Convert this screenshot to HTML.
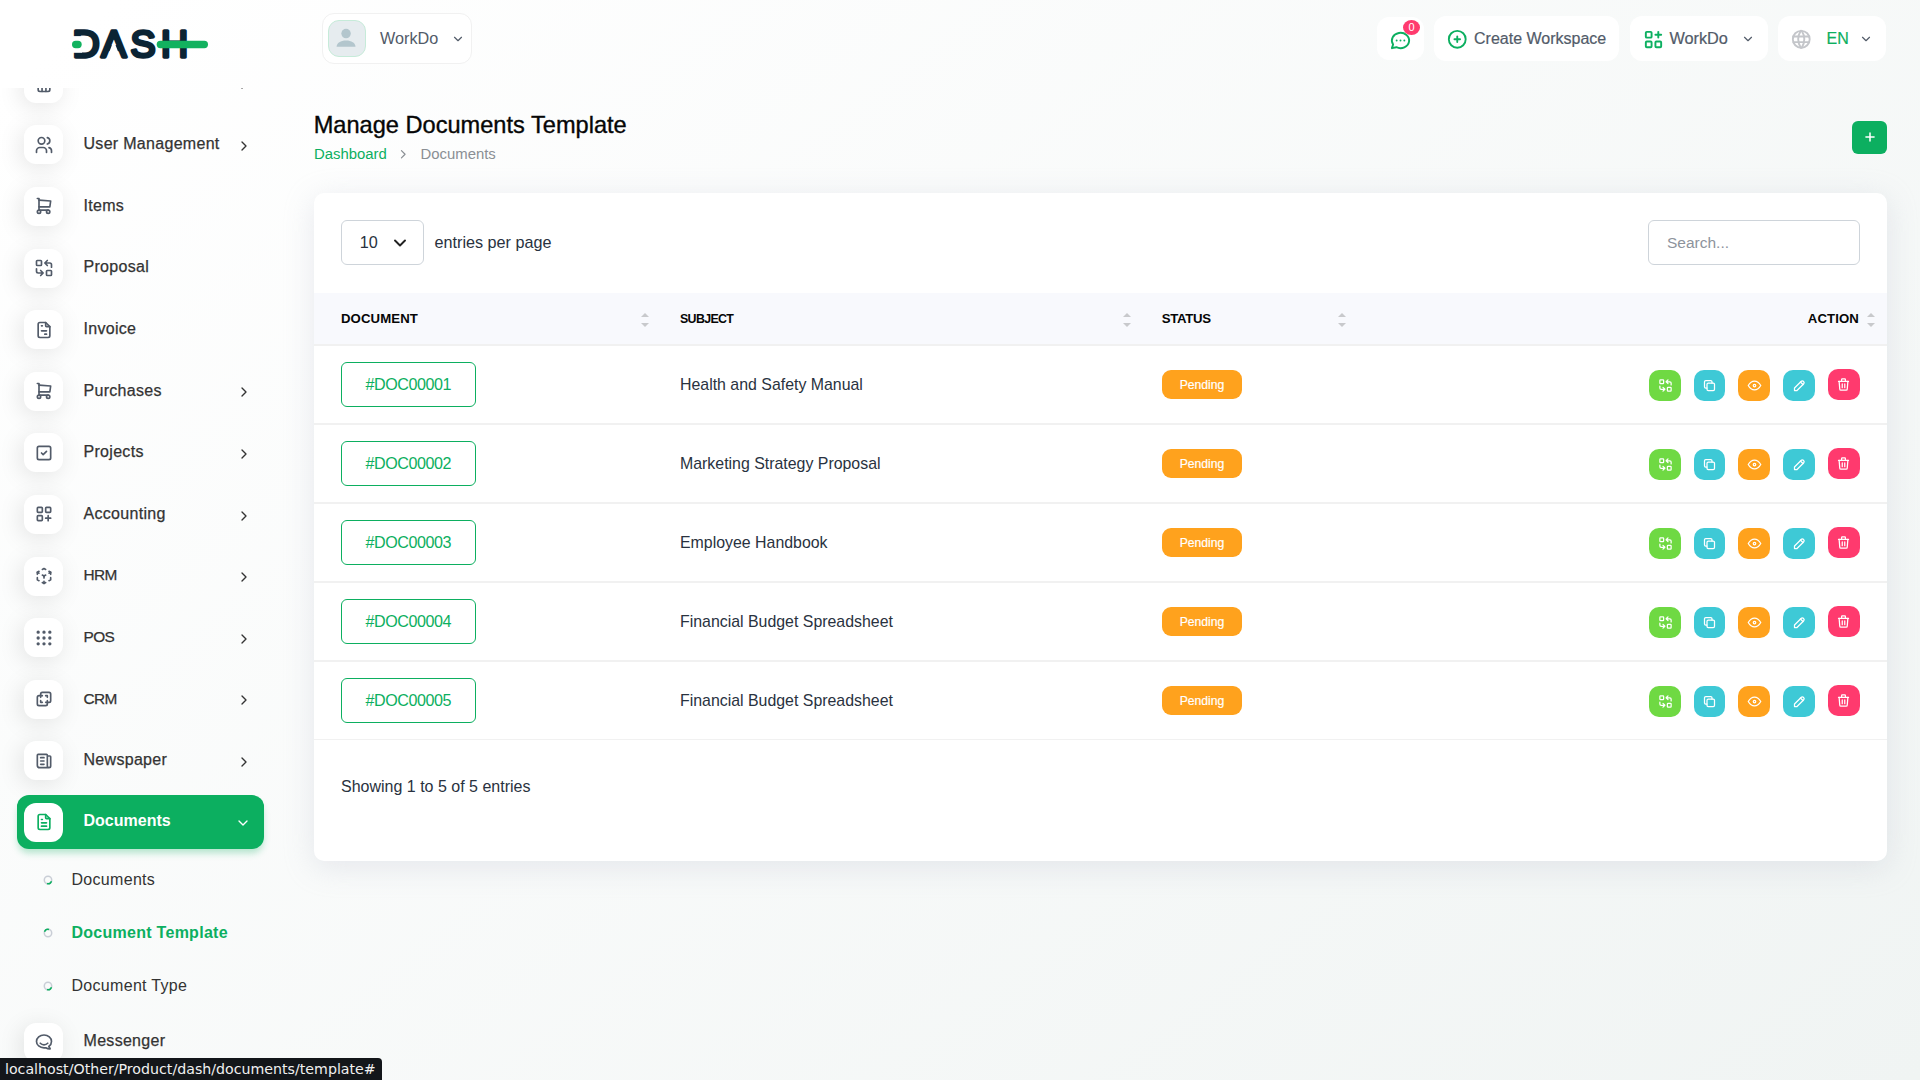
<!DOCTYPE html>
<html lang="en">
<head>
<meta charset="utf-8">
<title>Manage Documents Template</title>
<style>
*{box-sizing:border-box;margin:0;padding:0}
html,body{width:1920px;height:1080px;overflow:hidden}
body{font-family:"Liberation Sans",sans-serif;color:#293240;font-size:15px;
 background:linear-gradient(141.55deg,rgba(240,244,243,0) 3.46%,#f0f4f3 99.86%),#ffffff;position:relative}
svg.ti{fill:none;stroke:currentColor;stroke-width:2;stroke-linecap:round;stroke-linejoin:round;display:block}
a{text-decoration:none;color:inherit}

/* ---------- sidebar ---------- */
#logo{position:absolute;left:70px;top:26px;width:142px;height:38px}
#nav{position:absolute;left:0;top:88px;width:290px;height:992px;overflow:hidden}
.item{position:absolute;left:17px;width:247px;height:53.5px;border-radius:12px;color:#333;}
.item .tile{position:absolute;left:7px;top:7.4px;width:39px;height:39px;border-radius:12px;background:#fff;
 box-shadow:-3px 4px 23px rgba(0,0,0,.1);color:#525b69}
.item .tile svg{position:absolute;left:9.5px;top:9.5px;width:20px;height:20px}
.item .lbl{position:absolute;left:66.5px;top:15.3px;font-size:16px;letter-spacing:.3px;line-height:22px;white-space:nowrap;color:#333;-webkit-text-stroke:.25px}
.item .arr{position:absolute;left:218.8px;top:20px;width:16px;height:16px;color:#333}
.item.active{background:#0CAF60;box-shadow:0 5px 7px -1px rgba(12,175,96,.3)}
.item.active:before{content:"";position:absolute;left:0;top:-1px;width:100%;height:14px;background:#0CAF60;border-radius:12px 12px 0 0}
.item.active .tile{color:#0CAF60;box-shadow:none}
.item.active .lbl{color:#fff;font-weight:bold;letter-spacing:0;top:14.3px;-webkit-text-stroke:0}
.item.active .arr{color:#fff;top:19.2px;left:217.8px}
.sub{position:absolute;left:0;width:280px;height:30px}
.sub .dot{position:absolute;left:43.3px;top:10.7px;width:10px;height:10px}
.sub .lbl{position:absolute;left:71.5px;top:5.3px;font-size:16px;letter-spacing:.3px;line-height:22px;white-space:nowrap;color:#333}
.sub.on .lbl{color:#0CAF60;font-weight:bold;letter-spacing:.27px}

/* ---------- top bar ---------- */
#userdd{position:absolute;left:322px;top:13px;width:149.5px;height:50.5px;border:1px solid #f1f1f1;border-radius:12px;background:#fff}
#userdd .av{position:absolute;left:5px;top:6px;width:38px;height:37px;border-radius:11px;background:#e6ecef;border:1px solid #c6ebd9;overflow:hidden}
#userdd .nm{position:absolute;left:57px;top:14px;font-size:16.2px;line-height:20px;color:#525b69;white-space:nowrap}
#userdd svg.ti{position:absolute;left:128px;top:18px;width:14px;height:14px;color:#525b69}
.tb{position:absolute;top:16px;height:45px;background:#fff;border-radius:12px;color:#525b69}
.tb .tx{position:absolute;top:12px;font-size:16px;line-height:22px;white-space:nowrap;-webkit-text-stroke:.2px}
.tb svg.ti{position:absolute}
#badge{position:absolute;left:1402.8px;top:19.7px;width:17.4px;height:15.4px;border-radius:50%;background:#ff3a6e;color:#fff;font-size:11px;line-height:15.4px;text-align:center}

/* ---------- page head ---------- */
#ttl{position:absolute;left:313.7px;top:109.7px;font-size:23.6px;line-height:30px;color:#060606;white-space:nowrap;font-weight:normal;-webkit-text-stroke:.35px #060606}
#bc{position:absolute;left:314px;top:144px;font-size:14.9px;line-height:20px;white-space:nowrap}
#bc .a{position:absolute;left:0;top:0;color:#0CAF60}
#bc .b{position:absolute;left:106.5px;top:0;color:#8a8f94}
#bc svg{position:absolute;left:82.3px;top:2.8px;width:14.5px;height:14.5px;color:#8a8f94}
#add{position:absolute;left:1852px;top:121px;width:35px;height:33px;border-radius:6px;background:#0CAF60;color:#fff}
#add svg{position:absolute;left:10.5px;top:8.6px;width:14px;height:14px;stroke-width:2.6}

/* ---------- card ---------- */
#card{position:absolute;left:314px;top:193px;width:1573px;height:668px;background:#fff;border-radius:10px;
 box-shadow:0 6px 30px rgba(182,186,203,.3)}
#sel{position:absolute;left:27px;top:27px;width:83px;height:45px;border:1px solid #ced4da;border-radius:6px}
#sel span{position:absolute;left:17.8px;top:10px;font-size:16.2px;line-height:22px;color:#293240}
#sel svg{position:absolute;left:48.2px;top:12.4px;width:20px;height:20px;color:#222;stroke-width:2.3}
#epp{position:absolute;left:120.5px;top:38px;font-size:16.2px;line-height:22px;white-space:nowrap;color:#293240}
#srch{position:absolute;left:1334px;top:27px;width:212px;height:45px;border:1px solid #ced4da;border-radius:6px}
#srch span{position:absolute;left:18px;top:11px;font-size:15.5px;line-height:22px;color:#8d939c}
#thead{position:absolute;left:0;top:100px;width:1573px;height:51px;background:#f8f9fd;border-bottom:0}
#thead:after{content:"";position:absolute;left:0;top:51px;width:100%;height:2px;background:#f1f1f1}
.th{position:absolute;top:17.8px;font-size:13.2px;line-height:16px;font-weight:bold;color:#060606;white-space:nowrap;letter-spacing:.1px}
.srt{position:absolute;top:19.8px;width:8px;height:15px}
.srt:before,.srt:after{content:"";position:absolute;left:0;border-left:4px solid transparent;border-right:4px solid transparent}
.srt:before{top:0;border-bottom:4px solid #c8c9cc}
.srt:after{top:10.7px;border-top:4px solid #c8c9cc}
.row{position:absolute;left:0;width:1573px;height:79px;border-bottom:2px solid #f1f1f1}
.doc{position:absolute;left:27px;top:16px;width:135px;height:45px;border:1px solid #0CAF60;border-radius:6px;color:#0CAF60;
 font-size:16.1px;letter-spacing:-.45px;line-height:43px;text-align:center;text-indent:-.4px}
.subj{position:absolute;left:366px;top:28px;font-size:15.9px;line-height:22px;white-space:nowrap;color:#293240}
.pend{position:absolute;left:848px;top:24px;width:80px;height:29px;border-radius:9px;background:#ffa21d;color:#fff;font-size:12.2px;line-height:31.4px;text-align:center;-webkit-text-stroke:.2px}
.ab{position:absolute;top:24px;width:32px;height:31px;border-radius:10px;color:#fff}
.ab svg{position:absolute;left:8.5px;top:8px;width:15px;height:15px}
.ab1{left:1335px;background:#6fd943}
.ab2{left:1379.7px;background:#3ec9d6;width:31.2px}
.ab2 svg{left:8.1px}
.row.last{border-bottom-width:1px;height:78px}
.ab3{left:1424.3px;background:#ffa21d}
.ab4{left:1469px;background:#3ec9d6}
.ab5{left:1513.7px;background:#ff3a6e;top:23px}
#info{position:absolute;left:27px;top:583px;font-size:16px;line-height:22px;white-space:nowrap;color:#293240}

#status{position:absolute;left:0;top:1058px;width:382px;height:22px;background:#13161a;border-top-right-radius:4px;color:#f0f0f0;
 font-family:"DejaVu Sans","Liberation Sans",sans-serif;font-size:14.2px;line-height:23px;padding-left:5px;white-space:nowrap}
</style>
</head>
<body>
<svg id="logo" viewBox="0 0 142 38">
<text x="2.5 31.2 60.6 91.1" y="31.35" font-family="Liberation Sans, sans-serif" font-size="37.6" fill="#0b2434" stroke="#0b2434" stroke-width="3.3" stroke-linejoin="round" stroke-linecap="round">DASH</text>
<rect x="0" y="10.1" width="11.9" height="16.7" fill="#fff"/>
<polygon points="39.07,26.39 48.44,26.39 45.21,18.13 42.25,18.13" fill="#fff"/>
<rect x="2" y="14.8" width="9.7" height="7.4" rx="3.7" fill="#12b25f"/>
<rect x="86.7" y="14.8" width="51.3" height="7.4" rx="3.7" fill="#12b25f"/>
</svg>
<div id="nav">
<div class="item" style="top:-31.6px"><span class="tile"><svg class="ti" viewBox="0 0 24 24" style="top:10.200px"><path d="M5 12v7a2 2 0 0 0 2 2h10a2 2 0 0 0 2 -2v-7"/><path d="M9.670 21v-7"/><path d="M14.330 21v-7"/><path d="M5 12l-2 0l9 -9l9 9l-2 0"/></svg></span><span class="lbl" style="top:12px">Dashboard</span><svg class="ti arr" viewBox="0 0 24 24" ><polyline points="9 6 15 12 9 18"/></svg></div>
<div class="item" style="top:30.0px"><span class="tile"><svg class="ti" viewBox="0 0 24 24" ><circle cx="9" cy="7" r="4"/><path d="M3 21v-2a4 4 0 0 1 4 -4h4a4 4 0 0 1 4 4v2"/><path d="M16 3.13a4 4 0 0 1 0 7.75"/><path d="M21 21v-2a4 4 0 0 0 -3 -3.85"/></svg></span><span class="lbl">User Management</span><svg class="ti arr" viewBox="0 0 24 24" ><polyline points="9 6 15 12 9 18"/></svg></div>
<div class="item" style="top:91.6px"><span class="tile"><svg class="ti" viewBox="0 0 24 24" ><circle cx="6" cy="19" r="2"/><circle cx="17" cy="19" r="2"/><path d="M17 17h-11v-14h-2"/><path d="M6 5l14 1l-1 7h-13"/></svg></span><span class="lbl">Items</span></div>
<div class="item" style="top:153.2px"><span class="tile"><svg class="ti" viewBox="0 0 24 24" ><rect x="3" y="3" width="6" height="6" rx="1"/><rect x="15" y="15" width="6" height="6" rx="1"/><path d="M21 11v-3a2 2 0 0 0 -2 -2h-6l3 3m0 -6l-3 3"/><path d="M3 13v3a2 2 0 0 0 2 2h6l-3 -3m0 6l3 -3"/></svg></span><span class="lbl">Proposal</span></div>
<div class="item" style="top:214.8px"><span class="tile"><svg class="ti" viewBox="0 0 24 24" ><path d="M14 3v4a1 1 0 0 0 1 1h4"/><path d="M17 21h-10a2 2 0 0 1 -2 -2v-14a2 2 0 0 1 2 -2h7l5 5v11a2 2 0 0 1 -2 2z"/><path d="M9 7h1"/><path d="M9 13h6"/><path d="M13 17h2"/></svg></span><span class="lbl">Invoice</span></div>
<div class="item" style="top:276.4px"><span class="tile"><svg class="ti" viewBox="0 0 24 24" ><circle cx="6" cy="19" r="2"/><circle cx="17" cy="19" r="2"/><path d="M17 17h-11v-14h-2"/><path d="M6 5l14 1l-1 7h-13"/></svg></span><span class="lbl">Purchases</span><svg class="ti arr" viewBox="0 0 24 24" ><polyline points="9 6 15 12 9 18"/></svg></div>
<div class="item" style="top:338.0px"><span class="tile"><svg class="ti" viewBox="0 0 24 24" ><rect x="4" y="4" width="16" height="16" rx="2"/><path d="M9 12l2 2l4 -4"/></svg></span><span class="lbl">Projects</span><svg class="ti arr" viewBox="0 0 24 24" ><polyline points="9 6 15 12 9 18"/></svg></div>
<div class="item" style="top:399.6px"><span class="tile"><svg class="ti" viewBox="0 0 24 24" ><rect x="4" y="4" width="6" height="6" rx="1"/><rect x="14" y="4" width="6" height="6" rx="1"/><rect x="4" y="14" width="6" height="6" rx="1"/><path d="M14 17h6m-3 -3v6"/></svg></span><span class="lbl">Accounting</span><svg class="ti arr" viewBox="0 0 24 24" ><polyline points="9 6 15 12 9 18"/></svg></div>
<div class="item" style="top:461.2px"><span class="tile"><svg class="ti" viewBox="0 0 24 24" ><path d="M6 17.6l-2 -1.1v-2.5"/><path d="M4 10v-2.5l2 -1.1"/><path d="M10 4.1l2 -1.1l2 1.1"/><path d="M18 6.4l2 1.1v2.5"/><path d="M20 14v2.5l-2 1.12"/><path d="M14 19.9l-2 1.1l-2 -1.1"/><path d="M12 12l2 -1.1"/><path d="M18 8.6l2 -1.1"/><path d="M12 12v2.5"/><path d="M12 18.5v2.5"/><path d="M12 12l-2 -1.12"/><path d="M6 8.6l-2 -1.1"/></svg></span><span class="lbl" style="font-size:15.4px;letter-spacing:-.6px">HRM</span><svg class="ti arr" viewBox="0 0 24 24" ><polyline points="9 6 15 12 9 18"/></svg></div>
<div class="item" style="top:522.8px"><span class="tile"><svg class="ti" viewBox="0 0 24 24" ><circle cx="5" cy="5" r="1"/><circle cx="12" cy="5" r="1"/><circle cx="19" cy="5" r="1"/><circle cx="5" cy="12" r="1"/><circle cx="12" cy="12" r="1"/><circle cx="19" cy="12" r="1"/><circle cx="5" cy="19" r="1"/><circle cx="12" cy="19" r="1"/><circle cx="19" cy="19" r="1"/></svg></span><span class="lbl" style="font-size:15.4px;letter-spacing:-.6px">POS</span><svg class="ti arr" viewBox="0 0 24 24" ><polyline points="9 6 15 12 9 18"/></svg></div>
<div class="item" style="top:584.4px"><span class="tile"><svg class="ti" viewBox="0 0 24 24" ><path d="M16 16v2a2 2 0 0 1 -2 2h-8a2 2 0 0 1 -2 -2v-8a2 2 0 0 1 2 -2h2v-2a2 2 0 0 1 2 -2h8a2 2 0 0 1 2 2v8a2 2 0 0 1 -2 2h-2"/><path d="M10 8h-2v2"/><path d="M8 14v2h2"/><path d="M14 8h2v2"/><path d="M16 14v2h-2"/></svg></span><span class="lbl" style="font-size:15.4px;letter-spacing:-.6px">CRM</span><svg class="ti arr" viewBox="0 0 24 24" ><polyline points="9 6 15 12 9 18"/></svg></div>
<div class="item" style="top:646.0px"><span class="tile"><svg class="ti" viewBox="0 0 24 24" ><path d="M16 6h3a1 1 0 0 1 1 1v11a2 2 0 0 1 -4 0v-13a1 1 0 0 0 -1 -1h-10a1 1 0 0 0 -1 1v12a3 3 0 0 0 3 3h11"/><path d="M8 8h4"/><path d="M8 12h4"/><path d="M8 16h4"/></svg></span><span class="lbl">Newspaper</span><svg class="ti arr" viewBox="0 0 24 24" ><polyline points="9 6 15 12 9 18"/></svg></div>
<div class="item active" style="top:707.6px"><span class="tile"><svg class="ti" viewBox="0 0 24 24" ><path d="M14 3v4a1 1 0 0 0 1 1h4"/><path d="M17 21h-10a2 2 0 0 1 -2 -2v-14a2 2 0 0 1 2 -2h7l5 5v11a2 2 0 0 1 -2 2z"/><path d="M9 9h1"/><path d="M9 13h6"/><path d="M9 17h6"/></svg></span><span class="lbl">Documents</span><svg class="ti arr" viewBox="0 0 24 24" ><polyline points="6 9 12 15 18 9"/></svg></div>
<div class="sub" style="top:776px"><svg class="dot" viewBox="0 0 10 10"><circle cx="5" cy="5" r="3.7" fill="none" stroke="#c9ced6" stroke-width="1.5"/><path d="M8.5 6.2A3.7 3.7 0 0 1 4 8.56" fill="none" stroke="#0CAF60" stroke-width="1.5"/></svg><span class="lbl">Documents</span></div>
<div class="sub on" style="top:829px"><svg class="dot" viewBox="0 0 10 10"><circle cx="5" cy="5" r="3.7" fill="none" stroke="#c9ced6" stroke-width="1.5"/><path d="M1.5 3.8A3.7 3.7 0 0 1 6 1.44" fill="none" stroke="#0CAF60" stroke-width="1.5"/></svg><span class="lbl">Document Template</span></div>
<div class="sub" style="top:882px"><svg class="dot" viewBox="0 0 10 10"><circle cx="5" cy="5" r="3.7" fill="none" stroke="#c9ced6" stroke-width="1.5"/><path d="M8.5 6.2A3.7 3.7 0 0 1 4 8.56" fill="none" stroke="#0CAF60" stroke-width="1.5"/></svg><span class="lbl">Document Type</span></div>
<div class="item" style="top:927.2px"><span class="tile"><svg class="ti" viewBox="0 0 24 24" ><path d="M17.802 17.292s.077 -.055 .2 -.149c1.843 -1.425 3 -3.49 3 -5.789c0 -4.286 -4.03 -7.764 -9 -7.764c-4.97 0 -9 3.478 -9 7.764c0 4.288 4.03 7.646 9 7.646c.424 0 1.12 -.028 2.088 -.084c1.262 .82 3.104 1.493 4.716 1.493c.499 0 .734 -.41 .414 -.828c-.486 -.596 -1.156 -1.551 -1.416 -2.29z"/><path d="M7.5 13.5c2.5 2.5 6.5 2.5 9 0"/></svg></span><span class="lbl">Messenger</span></div>
</div>
<div id="userdd"><span class="av"><svg viewBox="0 0 38 37" width="36" height="35"><circle cx="18" cy="13.3" r="5" fill="#b3c6cd"/><path d="M8 27.300c0-4.400 4.400-6.800 10-6.800s10 2.400 10 6.800z" fill="#b3c6cd"/></svg></span><span class="nm">WorkDo</span><svg class="ti" viewBox="0 0 24 24" ><polyline points="6 9 12 15 18 9"/></svg></div>
<div class="tb" style="left:1377px;top:17px;width:47px;height:43px"><svg class="ti" viewBox="0 0 24 24" style="left:12.200px;top:11.800px;width:23px;height:23px;color:#0CAF60"><path d="M3 20l1.3 -3.9a9 8 0 1 1 3.4 2.9l-4.7 1"/><path d="M12 12v.01"/><path d="M8 12v.01"/><path d="M16 12v.01"/></svg></div><span id="badge">0</span>
<div class="tb" style="left:1434px;width:185px"><svg class="ti" viewBox="0 0 24 24" style="left:12.300px;top:11.500px;width:22.500px;height:22.500px;color:#0CAF60"><circle cx="12" cy="12" r="9"/><path d="M9 12h6"/><path d="M12 9v6"/></svg><span class="tx" style="left:40px">Create Workspace</span></div>
<div class="tb" style="left:1630px;width:138px"><svg class="ti" viewBox="0 0 24 24" style="left:11.900px;top:11.900px;width:23px;height:23px;color:#0CAF60"><rect x="4" y="4" width="6" height="6" rx="1"/><rect x="4" y="14" width="6" height="6" rx="1"/><rect x="14" y="14" width="6" height="6" rx="1"/><path d="M14 7h6"/><path d="M17 4v6"/></svg><span class="tx" style="left:39.400px;top:11.300px;font-size:16.300px">WorkDo</span><svg class="ti" viewBox="0 0 24 24" style="left:111px;top:16px;width:14px;height:14px"><polyline points="6 9 12 15 18 9"/></svg></div>
<div class="tb" style="left:1778px;width:108px"><svg class="ti" viewBox="0 0 24 24" style="left:12.200px;top:12px;width:22.500px;height:22.500px;color:#c4c6ca"><circle cx="12" cy="12" r="9"/><path d="M3.6 9h16.8"/><path d="M3.6 15h16.8"/><path d="M11.5 3a17 17 0 0 0 0 18"/><path d="M12.5 3a17 17 0 0 1 0 18"/></svg><span class="tx" style="left:48.500px;color:#0CAF60">EN</span><svg class="ti" viewBox="0 0 24 24" style="left:81px;top:16px;width:14px;height:14px"><polyline points="6 9 12 15 18 9"/></svg></div>
<h4 id="ttl">Manage Documents Template</h4>
<div id="bc"><span class="a">Dashboard</span><svg class="ti" viewBox="0 0 24 24" ><polyline points="9 6 15 12 9 18"/></svg><span class="b">Documents</span></div>
<div id="add"><svg class="ti" viewBox="0 0 24 24" ><path d="M12 5v14"/><path d="M5 12h14"/></svg></div>
<div id="card">
<div id="sel"><span>10</span><svg class="ti" viewBox="0 0 24 24" ><polyline points="6 9 12 15 18 9"/></svg></div><span id="epp">entries per page</span>
<div id="srch"><span>Search...</span></div>
<div id="thead"><span class="th" style="left:27px">DOCUMENT</span><i class="srt" style="left:327px"></i><span class="th" style="left:366px;font-size:12.4px;letter-spacing:-.65px">SUBJECT</span><i class="srt" style="left:809px"></i><span class="th" style="left:847.7px;letter-spacing:-.3px">STATUS</span><i class="srt" style="left:1024px"></i><span class="th" style="right:28px">ACTION</span><i class="srt" style="left:1553px"></i></div>
<div class="row" style="top:153px"><a class="doc">#DOC00001</a><span class="subj">Health and Safety Manual</span><span class="pend">Pending</span><span class="ab ab1"><svg class="ti" viewBox="0 0 24 24" ><rect x="3" y="3" width="6" height="6" rx="1"/><rect x="15" y="15" width="6" height="6" rx="1"/><path d="M21 11v-3a2 2 0 0 0 -2 -2h-6l3 3m0 -6l-3 3"/><path d="M3 13v3a2 2 0 0 0 2 2h6l-3 -3m0 6l3 -3"/></svg></span><span class="ab ab2"><svg class="ti" viewBox="0 0 24 24" ><rect x="8" y="8" width="12" height="12" rx="2"/><path d="M16 8v-2a2 2 0 0 0 -2 -2h-8a2 2 0 0 0 -2 2v8a2 2 0 0 0 2 2h2"/></svg></span><span class="ab ab3"><svg class="ti" viewBox="0 0 24 24" ><circle cx="12" cy="12" r="2"/><path d="M22 12c-2.667 4.667 -6 7 -10 7s-7.333 -2.333 -10 -7c2.667 -4.667 6 -7 10 -7s7.333 2.333 10 7"/></svg></span><span class="ab ab4"><svg class="ti" viewBox="0 0 24 24" ><path d="M4 20h4l10.500 -10.500a1.500 1.500 0 0 0 -4 -4l-10.500 10.500v4"/><path d="M13.500 6.500l4 4"/></svg></span><span class="ab ab5"><svg class="ti" viewBox="0 0 24 24" ><path d="M4 7h16"/><path d="M10 11v6"/><path d="M14 11v6"/><path d="M5 7l1 12a2 2 0 0 0 2 2h8a2 2 0 0 0 2 -2l1 -12"/><path d="M9 7v-3a1 1 0 0 1 1 -1h4a1 1 0 0 1 1 1v3"/></svg></span></div>
<div class="row" style="top:232px"><a class="doc">#DOC00002</a><span class="subj">Marketing Strategy Proposal</span><span class="pend">Pending</span><span class="ab ab1"><svg class="ti" viewBox="0 0 24 24" ><rect x="3" y="3" width="6" height="6" rx="1"/><rect x="15" y="15" width="6" height="6" rx="1"/><path d="M21 11v-3a2 2 0 0 0 -2 -2h-6l3 3m0 -6l-3 3"/><path d="M3 13v3a2 2 0 0 0 2 2h6l-3 -3m0 6l3 -3"/></svg></span><span class="ab ab2"><svg class="ti" viewBox="0 0 24 24" ><rect x="8" y="8" width="12" height="12" rx="2"/><path d="M16 8v-2a2 2 0 0 0 -2 -2h-8a2 2 0 0 0 -2 2v8a2 2 0 0 0 2 2h2"/></svg></span><span class="ab ab3"><svg class="ti" viewBox="0 0 24 24" ><circle cx="12" cy="12" r="2"/><path d="M22 12c-2.667 4.667 -6 7 -10 7s-7.333 -2.333 -10 -7c2.667 -4.667 6 -7 10 -7s7.333 2.333 10 7"/></svg></span><span class="ab ab4"><svg class="ti" viewBox="0 0 24 24" ><path d="M4 20h4l10.500 -10.500a1.500 1.500 0 0 0 -4 -4l-10.500 10.500v4"/><path d="M13.500 6.500l4 4"/></svg></span><span class="ab ab5"><svg class="ti" viewBox="0 0 24 24" ><path d="M4 7h16"/><path d="M10 11v6"/><path d="M14 11v6"/><path d="M5 7l1 12a2 2 0 0 0 2 2h8a2 2 0 0 0 2 -2l1 -12"/><path d="M9 7v-3a1 1 0 0 1 1 -1h4a1 1 0 0 1 1 1v3"/></svg></span></div>
<div class="row" style="top:311px"><a class="doc">#DOC00003</a><span class="subj">Employee Handbook</span><span class="pend">Pending</span><span class="ab ab1"><svg class="ti" viewBox="0 0 24 24" ><rect x="3" y="3" width="6" height="6" rx="1"/><rect x="15" y="15" width="6" height="6" rx="1"/><path d="M21 11v-3a2 2 0 0 0 -2 -2h-6l3 3m0 -6l-3 3"/><path d="M3 13v3a2 2 0 0 0 2 2h6l-3 -3m0 6l3 -3"/></svg></span><span class="ab ab2"><svg class="ti" viewBox="0 0 24 24" ><rect x="8" y="8" width="12" height="12" rx="2"/><path d="M16 8v-2a2 2 0 0 0 -2 -2h-8a2 2 0 0 0 -2 2v8a2 2 0 0 0 2 2h2"/></svg></span><span class="ab ab3"><svg class="ti" viewBox="0 0 24 24" ><circle cx="12" cy="12" r="2"/><path d="M22 12c-2.667 4.667 -6 7 -10 7s-7.333 -2.333 -10 -7c2.667 -4.667 6 -7 10 -7s7.333 2.333 10 7"/></svg></span><span class="ab ab4"><svg class="ti" viewBox="0 0 24 24" ><path d="M4 20h4l10.500 -10.500a1.500 1.500 0 0 0 -4 -4l-10.500 10.500v4"/><path d="M13.500 6.500l4 4"/></svg></span><span class="ab ab5"><svg class="ti" viewBox="0 0 24 24" ><path d="M4 7h16"/><path d="M10 11v6"/><path d="M14 11v6"/><path d="M5 7l1 12a2 2 0 0 0 2 2h8a2 2 0 0 0 2 -2l1 -12"/><path d="M9 7v-3a1 1 0 0 1 1 -1h4a1 1 0 0 1 1 1v3"/></svg></span></div>
<div class="row" style="top:390px"><a class="doc">#DOC00004</a><span class="subj">Financial Budget Spreadsheet</span><span class="pend">Pending</span><span class="ab ab1"><svg class="ti" viewBox="0 0 24 24" ><rect x="3" y="3" width="6" height="6" rx="1"/><rect x="15" y="15" width="6" height="6" rx="1"/><path d="M21 11v-3a2 2 0 0 0 -2 -2h-6l3 3m0 -6l-3 3"/><path d="M3 13v3a2 2 0 0 0 2 2h6l-3 -3m0 6l3 -3"/></svg></span><span class="ab ab2"><svg class="ti" viewBox="0 0 24 24" ><rect x="8" y="8" width="12" height="12" rx="2"/><path d="M16 8v-2a2 2 0 0 0 -2 -2h-8a2 2 0 0 0 -2 2v8a2 2 0 0 0 2 2h2"/></svg></span><span class="ab ab3"><svg class="ti" viewBox="0 0 24 24" ><circle cx="12" cy="12" r="2"/><path d="M22 12c-2.667 4.667 -6 7 -10 7s-7.333 -2.333 -10 -7c2.667 -4.667 6 -7 10 -7s7.333 2.333 10 7"/></svg></span><span class="ab ab4"><svg class="ti" viewBox="0 0 24 24" ><path d="M4 20h4l10.500 -10.500a1.500 1.500 0 0 0 -4 -4l-10.500 10.500v4"/><path d="M13.500 6.500l4 4"/></svg></span><span class="ab ab5"><svg class="ti" viewBox="0 0 24 24" ><path d="M4 7h16"/><path d="M10 11v6"/><path d="M14 11v6"/><path d="M5 7l1 12a2 2 0 0 0 2 2h8a2 2 0 0 0 2 -2l1 -12"/><path d="M9 7v-3a1 1 0 0 1 1 -1h4a1 1 0 0 1 1 1v3"/></svg></span></div>
<div class="row last" style="top:469px"><a class="doc">#DOC00005</a><span class="subj">Financial Budget Spreadsheet</span><span class="pend">Pending</span><span class="ab ab1"><svg class="ti" viewBox="0 0 24 24" ><rect x="3" y="3" width="6" height="6" rx="1"/><rect x="15" y="15" width="6" height="6" rx="1"/><path d="M21 11v-3a2 2 0 0 0 -2 -2h-6l3 3m0 -6l-3 3"/><path d="M3 13v3a2 2 0 0 0 2 2h6l-3 -3m0 6l3 -3"/></svg></span><span class="ab ab2"><svg class="ti" viewBox="0 0 24 24" ><rect x="8" y="8" width="12" height="12" rx="2"/><path d="M16 8v-2a2 2 0 0 0 -2 -2h-8a2 2 0 0 0 -2 2v8a2 2 0 0 0 2 2h2"/></svg></span><span class="ab ab3"><svg class="ti" viewBox="0 0 24 24" ><circle cx="12" cy="12" r="2"/><path d="M22 12c-2.667 4.667 -6 7 -10 7s-7.333 -2.333 -10 -7c2.667 -4.667 6 -7 10 -7s7.333 2.333 10 7"/></svg></span><span class="ab ab4"><svg class="ti" viewBox="0 0 24 24" ><path d="M4 20h4l10.500 -10.500a1.500 1.500 0 0 0 -4 -4l-10.500 10.500v4"/><path d="M13.500 6.500l4 4"/></svg></span><span class="ab ab5"><svg class="ti" viewBox="0 0 24 24" ><path d="M4 7h16"/><path d="M10 11v6"/><path d="M14 11v6"/><path d="M5 7l1 12a2 2 0 0 0 2 2h8a2 2 0 0 0 2 -2l1 -12"/><path d="M9 7v-3a1 1 0 0 1 1 -1h4a1 1 0 0 1 1 1v3"/></svg></span></div>
<div id="info">Showing 1 to 5 of 5 entries</div></div>
<div id="status">localhost/Other/Product/dash/documents/template#</div>
</body>
</html>
